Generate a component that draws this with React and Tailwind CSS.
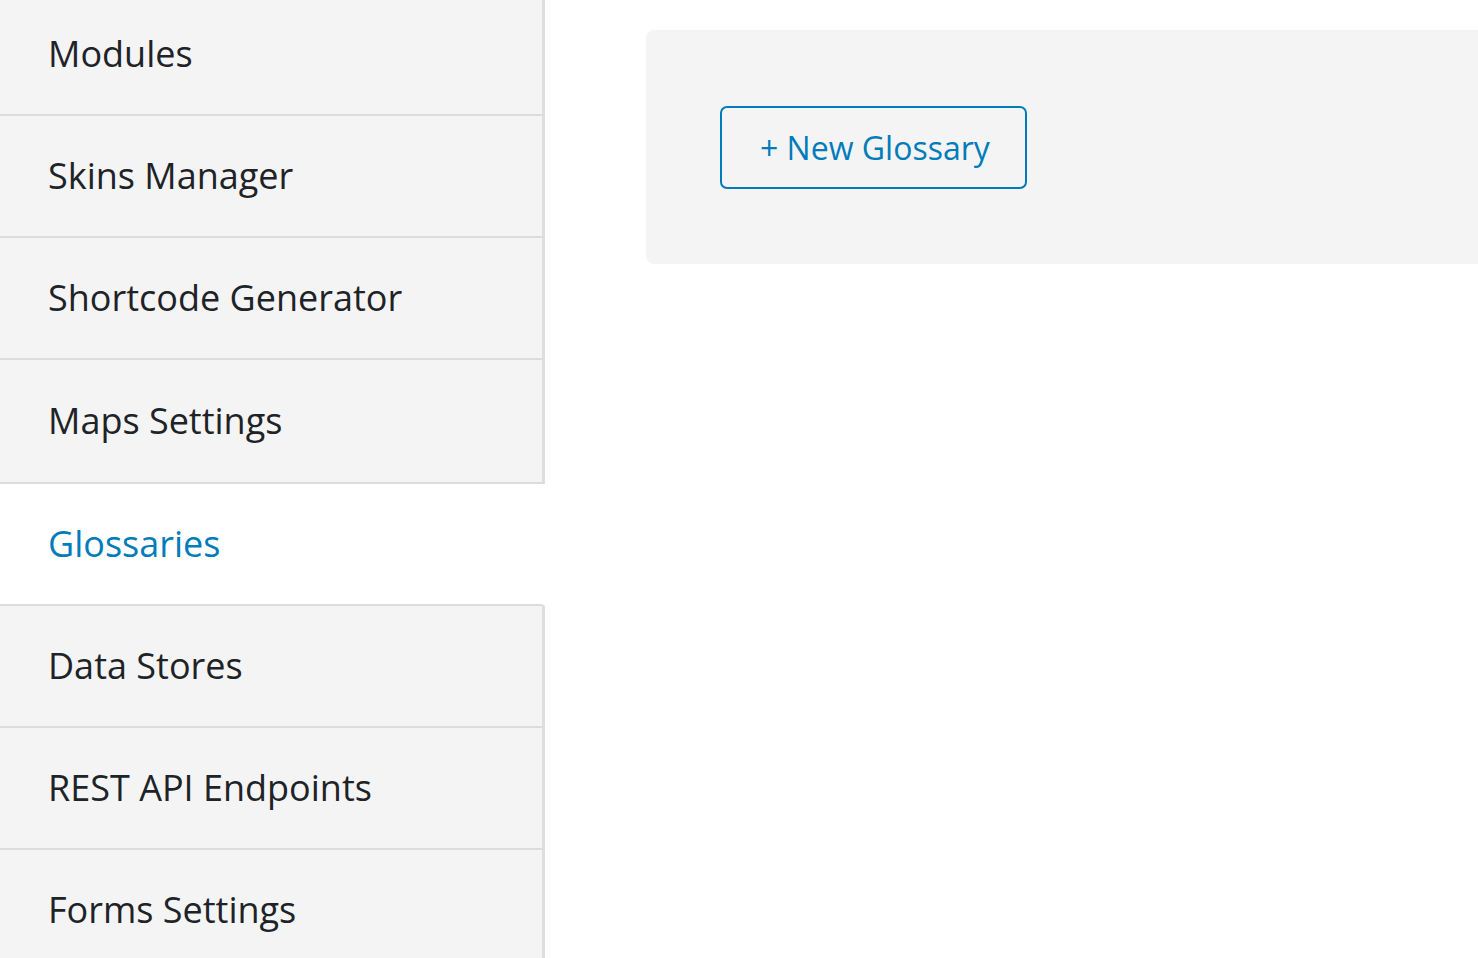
import React, { useState } from "react";

const items = [
  "Modules",
  "Skins Manager",
  "Shortcode Generator",
  "Maps Settings",
  "Glossaries",
  "Data Stores",
  "REST API Endpoints",
  "Forms Settings",
];

const App = () => {
  const [active, setActive] = useState("Glossaries");

  return (
    <div
      className="flex min-h-screen overflow-hidden bg-white"
      style={{ fontFamily: '"Open Sans", "Noto Sans", sans-serif' }}
    >
      {/* left menu */}
      <div className="w-[545px] shrink-0 flex flex-col -mt-[6px]">
        {items.map((name, i) => {
          const isActive = name === active;
          return (
            <div
              key={name}
              onClick={() => setActive(name)}
              className={`shrink-0 flex items-center pl-[48px] border-b-2 border-b-[#dcdcdc] border-r-[3px] cursor-pointer text-[36px] ${
                i === 3 ? "h-[124px]" : "h-[122px]"
              } ${
                isActive
                  ? "bg-white border-r-white text-[#007cba]"
                  : "bg-[#f4f4f4] border-r-[#dedede] text-[#1d2327]"
              }`}
            >
              {name}
            </div>
          );
        })}
        <div className="flex-1 bg-[#f4f4f4] border-r-[3px] border-r-[#dedede]"></div>
      </div>

      {/* content */}
      <div className="flex-1 pl-[101px] pt-[30px]">
        <div className="bg-[#f4f4f4] rounded-l-[8px] h-[234px] pl-[74px] pt-[76px]">
          <button className="h-[83px] pl-[38px] pr-[35px] border-2 border-[#007cba] rounded-[7px] text-[#007cba] text-[32px] bg-transparent">
            + New Glossary
          </button>
        </div>
      </div>
    </div>
  );
};

export default App;
